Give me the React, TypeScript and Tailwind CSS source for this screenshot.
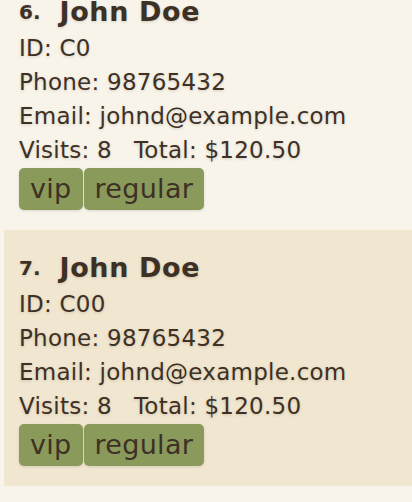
import React from "react";

const shadow = "[text-shadow:0_1px_3px_rgba(60,40,20,0.18)]";

function Card({ idx, id, selected }: { idx: number; id: string; selected?: boolean }) {
  return (
    <div
      className={`ml-1 h-[256px] pl-[15px] pt-[19px] ${selected ? "bg-[#f1e6cf]" : "bg-[#f8f4ea]"}`}
    >
      <div className={`flex h-[38px] items-center gap-[19px] ${shadow}`}>
        <span className="text-[20px] font-bold">{idx}.</span>
        <span className="text-[27px] font-bold tracking-[0.6px]">John Doe</span>
      </div>
      <div className={`text-[23px] leading-[34px] tracking-[0.25px] ${shadow}`}>
        <div>ID: {id}</div>
        <div>Phone: 98765432</div>
        <div>Email: johnd@example.com</div>
        <div>
          Visits: 8<span className="inline-block w-[22px]" />Total: $120.50
        </div>
      </div>
      <div className="mt-[1px] flex gap-[1px]">
        {["vip", "regular"].map((t) => (
          <span
            key={t}
            className={`flex h-[42px] items-center rounded-[5px] bg-[#8a9a5b] px-[11px] text-[27px] tracking-[0.3px] shadow-[0_1px_3px_rgba(0,0,0,0.12)]`}
          >
            {t}
          </span>
        ))}
      </div>
    </div>
  );
}

export default function App() {
  return (
    <div className="h-[502px] w-[412px] overflow-hidden bg-[#f8f4ea] font-['DejaVu_Sans',sans-serif] text-[#3d3024]">
      <div className="-mt-[26px]">
        <Card idx={6} id="C0" />
        <Card idx={7} id="C00" selected />
      </div>
    </div>
  );
}
